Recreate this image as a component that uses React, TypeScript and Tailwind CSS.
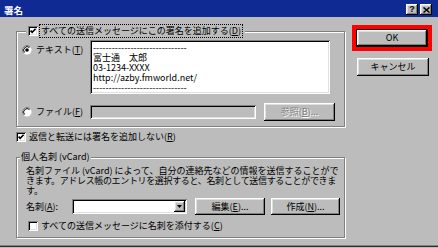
import React from "react";

const F = "font-['Noto_Sans_CJK_JP','Noto_Sans',sans-serif]";
const raised =
  "shadow-[inset_-1px_-1px_0_#000000,inset_1px_1px_0_#ffffff,inset_-2px_-2px_0_#808080,inset_2px_2px_0_#dfdfdf]";
const sunken =
  "shadow-[inset_1px_1px_0_#808080,inset_-1px_-1px_0_#ffffff,inset_2px_2px_0_#000000,inset_-2px_-2px_0_#dfdfdf]";
const etched = "border border-[#808080] shadow-[inset_1px_1px_0_#ffffff,1px_1px_0_#ffffff]";

function Check({ checked }: { checked: boolean }) {
  return (
    <span className={`inline-flex w-[10px] h-[10px] bg-white shrink-0 ${sunken}`}>
      {checked && (
        <svg width="10" height="10" viewBox="0 0 10 10">
          <polyline points="2.6,4.6 4.2,6.4 7.6,2.8" fill="none" stroke="#000" strokeWidth="1.6" />
        </svg>
      )}
    </span>
  );
}

function Radio({ on }: { on: boolean }) {
  return (
    <svg width="10" height="10" viewBox="0 0 10 10" className="shrink-0">
      <circle cx="5" cy="5" r="4.5" fill="#fff" />
      <path d="M8.18 1.82 A4.5 4.5 0 0 0 1.82 8.18" fill="none" stroke="#808080" strokeWidth="1" />
      <path d="M7.47 2.53 A3.5 3.5 0 0 0 2.53 7.47" fill="none" stroke="#000" strokeWidth="1" />
      {on && <circle cx="5" cy="5" r="1.8" fill="#000" />}
    </svg>
  );
}

function Btn({
  children,
  className = "",
  disabled = false,
}: {
  children: React.ReactNode;
  className?: string;
  disabled?: boolean;
}) {
  return (
    <div
      className={`flex items-center justify-center bg-[#bcbcbc] shrink-0 whitespace-nowrap ${raised} ${
        disabled ? "text-[#808080] [text-shadow:1px_1px_0_#ffffff]" : "text-black"
      } ${className}`}
    >
      {children}
    </div>
  );
}

export default function App() {
  return (
    <div
      className={`w-[438px] h-[248px] bg-[#bcbcbc] text-black ${F} text-[9px] leading-[12px] flex flex-col overflow-hidden`}
    >
      {/* Title bar */}
      <div className="h-[17px] bg-[#102a94] flex items-center pl-[4px] pr-[6px] shrink-0">
        <span className="mt-[3px] text-white font-bold text-[9.5px] leading-[12px]">署名</span>
        <div className="ml-auto mt-[2px] flex gap-[2px]">
          <div className={`w-[12px] h-[11px] bg-[#bcbcbc] ${raised} flex items-center justify-center`}>
            <span className="text-[9px] font-bold leading-[9px] font-['Liberation_Sans',sans-serif]">?</span>
          </div>
          <div className={`w-[12px] h-[11px] bg-[#bcbcbc] ${raised} flex items-center justify-center`}>
            <svg width="7" height="6" viewBox="0 0 7 6">
              <path d="M0.5 0.5 L6.5 5.5 M6.5 0.5 L0.5 5.5" stroke="#000" strokeWidth="1.5" />
            </svg>
          </div>
        </div>
      </div>

      {/* Body */}
      <div className="flex flex-1">
        <div className="w-[352px] pl-[16px] flex flex-col shrink-0">
          {/* Group 1 */}
          <div className={`mt-[14px] h-[96px] w-[329px] ${etched} flex flex-col`}>
            <div className="-mt-[8px] ml-[9px] self-start bg-[#bcbcbc] px-[2px] h-[14px] flex items-center gap-[1px]">
              <Check checked />
              <span className="border border-dotted border-black px-[1px] leading-[12px] whitespace-nowrap">
                すべての送信メッセージにこの署名を追加する(<u>D</u>)
              </span>
            </div>
            <div className="flex mt-[2px]">
              <div className="w-[73px] pl-[5px] mt-[4px] h-[12px] flex items-center gap-[4px] whitespace-nowrap">
                <Radio on />
                <span>
                  テキスト(<u>T</u>)
                </span>
              </div>
              <div className={`w-[240px] h-[54px] bg-white ${sunken} pl-[3px] pt-[3px] leading-[10px] whitespace-nowrap overflow-hidden`}>
                <div>------------------------------</div>
                <div>富士通　太郎</div>
                <div>03-1234-XXXX</div>
                <div>http://azby.fmworld.net/</div>
                <div>------------------------------</div>
              </div>
            </div>
            <div className="flex items-center mt-[9px] h-[18px]">
              <div className="w-[73px] pl-[5px] flex items-center gap-[4px] whitespace-nowrap">
                <Radio on={false} />
                <span>
                  ファイル(<u>F</u>)
                </span>
              </div>
              <div className={`w-[166px] h-[14px] ${sunken}`} />
              <Btn className="ml-[8px] w-[71px] h-[18px]" disabled>
                <span>
                  参照(<u>B</u>)...
                </span>
              </Btn>
            </div>
          </div>

          {/* Reply checkbox */}
          <div className="mt-[4px] h-[12px] flex items-center gap-[3px] whitespace-nowrap">
            <Check checked />
            <span>
              返信と転送には署名を追加しない(<u>R</u>)
            </span>
          </div>

          {/* Group 2 */}
          <div className={`mt-[14px] h-[81px] w-[329px] ${etched} flex flex-col`}>
            <div className="-mt-[8px] ml-[3px] self-start bg-[#bcbcbc] px-[1px] h-[14px] flex items-center whitespace-nowrap">
              個人名刺 (vCard)
            </div>
            <div className="mt-[2px] pl-[9px] leading-[10px] whitespace-nowrap">
              <div>名刺ファイル (vCard) によって、自分の連絡先などの情報を送信することがで</div>
              <div className="tracking-[-0.35px]">きます。アドレス帳のエントリを選択すると、名刺として送信することができま</div>
              <div>す。</div>
            </div>
            <div className="mt-[2px] h-[17px] pl-[9px] flex items-center">
              <span className="w-[46px] whitespace-nowrap">
                名刺(<u>A</u>):
              </span>
              <div className={`w-[115px] h-[15px] bg-white ${sunken} flex items-center justify-end pr-[2px]`}>
                <div className={`w-[11px] h-[11px] bg-[#bcbcbc] ${raised} flex items-center justify-center`}>
                  <svg width="5" height="3" viewBox="0 0 5 3">
                    <path d="M0 0 H5 L2.5 3 Z" fill="#000" />
                  </svg>
                </div>
              </div>
              <Btn className="ml-[8px] w-[70px] h-[17px]">
                <span>
                  編集(<u>E</u>)...
                </span>
              </Btn>
              <Btn className="ml-[6px] w-[69px] h-[17px]">
                <span>
                  作成(<u>N</u>)...
                </span>
              </Btn>
            </div>
            <div className="mt-[5px] pl-[11px] h-[12px] flex items-center gap-[3px] whitespace-nowrap">
              <Check checked={false} />
              <span>
                すべての送信メッセージに名刺を添付する(<u>C</u>)
              </span>
            </div>
          </div>
        </div>

        {/* Right buttons */}
        <div className="flex flex-col">
          <div className="mt-[8px] w-[80px] h-[26px] border-[4px] border-[#ff0000] flex">
            <div className="flex-1 border border-black flex">
              <Btn className="flex-1">OK</Btn>
            </div>
          </div>
          <Btn className="mt-[7px] ml-[5px] w-[72px] h-[18px]">キャンセル</Btn>
        </div>
      </div>

      {/* bottom frame */}
      <div className="h-[1px] bg-[#808080] shrink-0" />
      <div className="h-[1px] bg-[#303030] shrink-0" />
      <div className="h-[1px] shrink-0" />
    </div>
  );
}
